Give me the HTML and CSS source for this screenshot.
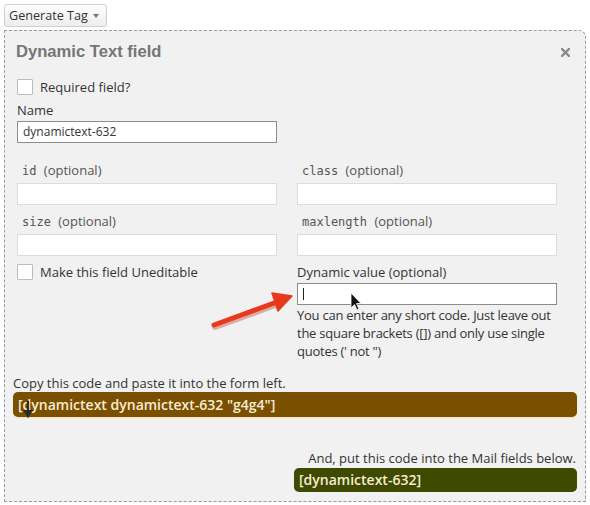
FILE: index.html
```html
<!DOCTYPE html>
<html>
<head>
<meta charset="utf-8">
<link rel="stylesheet" href="styles.css">
</head>
<body>
<div class="page">
  <button class="gen">Generate Tag <span class="caret"></span></button>
  <div class="panel">
    <div class="head">
      <h1 class="title">Dynamic Text field</h1>
      <svg class="close" width="9" height="9" viewBox="0 0 9 9"><path d="M1 1 L8 8 M8 1 L1 8" stroke="#8a8a8a" stroke-width="2.4" stroke-linecap="square"/></svg>
    </div>
    <label class="check first"><span class="box"></span>Required field?</label>
    <div class="lbl name-lbl">Name</div>
    <div class="input dark name-input">dynamictext-632</div>
    <div class="grid">
      <div class="col">
        <div class="lbl opt"><code>id</code> (optional)</div>
        <div class="input"></div>
        <div class="lbl opt second"><code>size</code> (optional)</div>
        <div class="input"></div>
        <label class="check third"><span class="box"></span>Make this field Uneditable</label>
      </div>
      <div class="col">
        <div class="lbl opt"><code>class</code> (optional)</div>
        <div class="input"></div>
        <div class="lbl opt second"><code>maxlength</code> (optional)</div>
        <div class="input"></div>
        <div class="lbl dyn-lbl">Dynamic value (optional)</div>
        <div class="input dark dyn-input"><span class="caretline"></span></div>
        <p class="help">You can enter any short code. Just leave out the square brackets ([]) and only use single quotes (' not ")</p>
      </div>
    </div>
    <div class="lbl copy-lbl">Copy this code and paste it into the form left.</div>
    <div class="bar brown">[dynamictext dynamictext-632 "g4g4"]</div>
    <div class="mail">
      <div class="lbl mail-lbl">And, put this code into the Mail fields below.</div>
      <div class="bar green">[dynamictext-632]</div>
    </div>
  </div>
  <svg class="overlay" width="590" height="505" viewBox="0 0 590 505">
    <line x1="214" y1="325" x2="277" y2="302" stroke="#b02a10" stroke-opacity="0.35" stroke-width="6" stroke-linecap="round" transform="translate(1,2)"/>
    <line x1="214" y1="325" x2="277" y2="302" stroke="#e8391d" stroke-width="5" stroke-linecap="round"/>
    <polygon points="292,296 278,311 272,293" fill="#e8391d" stroke="#e8391d" stroke-width="1.5" stroke-linejoin="round"/>
    <path d="M351 293 L351 308 L354.5 304.5 L357 310 L359 309 L356.5 303.5 L361 303.5 Z" fill="#111" stroke="#fff" stroke-width="0.8"/>
    <path d="M28 401 L28 412 M25 411 L28 416 L31 411 Z" stroke="#2a2a2a" stroke-width="2.2" fill="#2a2a2a"/>
  </svg>
</div>
</body>
</html>
```
FILE: styles.css
```css
* { box-sizing: border-box; }
body {
  margin: 0;
  background: #fff;
  font-family: "Open Sans", "Liberation Sans", sans-serif;
  color: #333;
}
.page {
  position: relative;
  width: 590px;
  height: 505px;
  padding: 4px 4px 0 4px;
}
.gen {
  display: flex;
  align-items: center;
  gap: 5px;
  height: 23px;
  width: 103px;
  padding: 0 0 0 4px;
  font-family: "Open Sans", sans-serif;
  font-size: 12.6px;
  color: #333;
  background: linear-gradient(#fdfdfd, #ededed);
  border: 1px solid #cfcfcf;
  border-radius: 3px;
}
.caret {
  width: 0;
  height: 0;
  border-left: 3.5px solid transparent;
  border-right: 3.5px solid transparent;
  border-top: 4px solid #777;
  margin-top: 1px;
}
.panel {
  margin-top: 3px;
  width: 582px;
  border: 1px dashed #9a9a9a;
  border-top-right-radius: 7px;
  background: #f1f1f1;
  padding: 10px 8px 9px 12px;
}
.head {
  display: flex;
  align-items: center;
  justify-content: space-between;
  padding-right: 7px;
}
.title {
  margin: 0 0 0 -1px;
  font-family: "Liberation Sans", Arial, sans-serif;
  font-weight: bold;
  font-size: 16.6px;
  line-height: 21px;
  color: #757575;
}
.close { margin-top: 2px; }
.check {
  display: flex;
  align-items: center;
  gap: 7px;
  font-size: 13px;
  line-height: 18px;
  color: #333;
}
.box {
  width: 16px;
  height: 16px;
  background: #fff;
  border: 1px solid #bdbdbd;
  border-radius: 1px;
}
.check.first { margin-top: 16px; }
.lbl {
  font-size: 13px;
  line-height: 18px;
  color: #333;
}
.name-lbl { margin-top: 5px; }
.input {
  height: 22px;
  width: 260px;
  background: #fff;
  border: 1px solid #dcdcdc;
}
.input.dark { border-color: #8c8c8c; }
.name-input {
  margin-top: 2px;
  font-size: 12px;
  line-height: 20px;
  padding-left: 5px;
  color: #333;
}
.grid {
  display: grid;
  grid-template-columns: 260px 260px;
  column-gap: 20px;
  margin-top: 18px;
}
.opt {
  padding-left: 5px;
  margin-bottom: 3px;
  color: #555;
}
.opt code {
  font-family: "DejaVu Sans Mono", monospace;
  font-size: 12px;
  margin-right: 4px;
}
.opt.second { margin-top: 7px; }
.check.third { margin-top: 7px; }
.dyn-lbl { margin-top: 7px; }
.dyn-input {
  position: relative;
  margin-top: 2px;
}
.caretline {
  position: absolute;
  left: 5px;
  top: 4px;
  width: 1px;
  height: 12px;
  background: #222;
}
.help {
  margin: 1px 0 0 0;
  font-size: 13px;
  line-height: 18px;
  letter-spacing: -0.25px;
  color: #333;
}
.copy-lbl {
  margin-top: 14px;
  margin-left: -4px;
}
.bar {
  height: 25px;
  border-radius: 5px;
  font-size: 14px;
  font-weight: 600;
  line-height: 25px;
  padding-left: 5px;
  color: #f7ecd2;
}
.brown {
  margin-left: -4px;
  background: #7b4f00;
  box-shadow: 0 1px 1px rgba(255, 210, 120, 0.5);
}
.mail {
  margin-top: 32px;
  margin-left: auto;
  width: 283px;
}
.mail-lbl {
  text-align: right;
  padding-right: 1px;
}
.green {
  margin-top: 1px;
  height: 24px;
  line-height: 24px;
  background: #3e4a00;
}
.overlay {
  position: absolute;
  left: 0;
  top: 0;
  pointer-events: none;
}
```
